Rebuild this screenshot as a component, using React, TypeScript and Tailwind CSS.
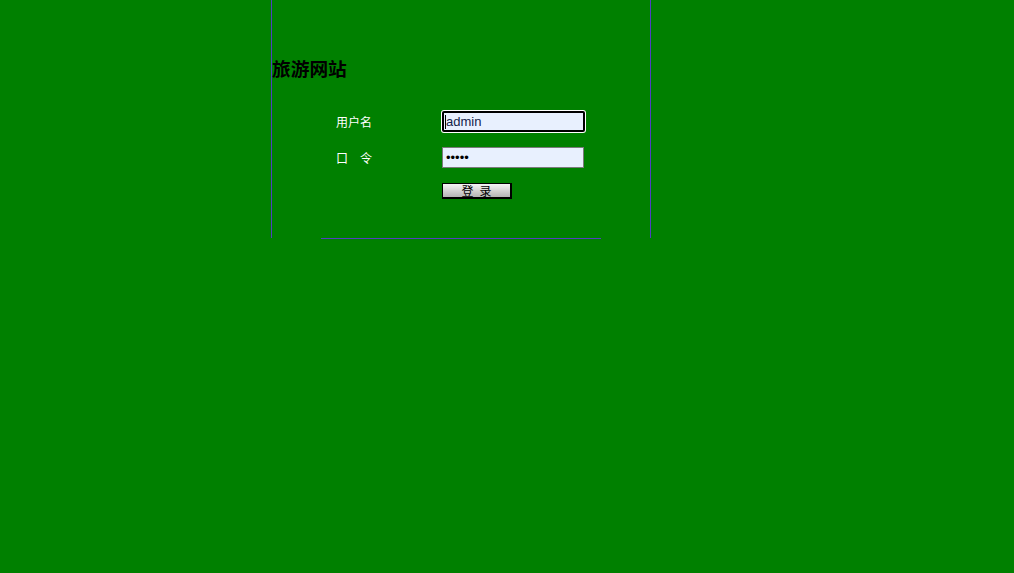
import React from "react";

export default function App() {
  return (
    <div className="min-h-[573px] w-full bg-[#008000] font-['Noto_Sans_CJK_SC',sans-serif]">
      <div className="ml-[271px] h-[238px] w-[380px] border-x border-[#5040c0] flex flex-col">
        <h3 className="mt-[54px] text-[18.72px] font-bold leading-[27px] text-black font-['Noto_Sans_CJK_SC',sans-serif]">
          旅游网站
        </h3>
        <div className="mt-[30px] ml-[64px] flex flex-col">
          <div className="flex items-center h-[21px]">
            <span className="w-[106px] text-[12px] text-white">用户名</span>
            <div className="w-[143px] h-[21px] rounded-[2px] border-2 border-black bg-[#e8f0fe] shadow-[0_0_0_1px_#ffffff] flex items-center pl-[1px]">
              <span className="w-px h-[14px] bg-black"></span>
              <span className="text-[13px] leading-none text-[#13234a] font-['Liberation_Sans',sans-serif]">admin</span>
            </div>
          </div>
          <div className="flex items-center h-[21px] mt-[15px]">
            <span className="w-[106px] text-[12px] text-white">口　令</span>
            <div className="w-[142px] h-[21px] border border-[#7a7a7a] bg-[#e8f0fe] flex items-center pl-[3px]">
              <span className="text-[13px] leading-none text-black font-['Liberation_Sans',sans-serif]">•••••</span>
            </div>
          </div>
          <div className="flex items-center h-[16px] mt-[15px]">
            <span className="w-[106px]"></span>
            <button className="w-[70px] h-[16px] border border-black border-r-2 border-b-2 bg-[linear-gradient(to_bottom,#f4f4f4,#b4b4b4)] flex items-center justify-center gap-[6px] text-[12px] leading-none text-black p-0">
              <span>登</span>
              <span>录</span>
            </button>
          </div>
        </div>
      </div>
      <div className="ml-[321px] h-px w-[280px] bg-[#5040c0]"></div>
    </div>
  );
}
